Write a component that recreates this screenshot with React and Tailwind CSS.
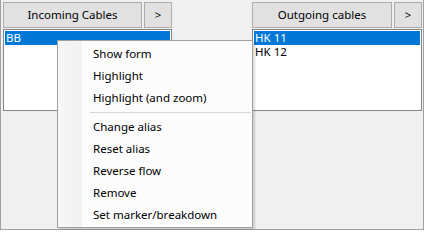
import React from "react";

const font = { fontFamily: '"Noto Sans", "Liberation Sans", sans-serif' };

function CableList({ title, items, className }) {
  return (
    <div className={`flex w-[169px] flex-col ${className}`}>
      <div className="flex h-[26px] gap-[2px]">
        <button
          type="button"
          className="flex-1 border border-[#adadad] bg-[#e1e1e1] text-[11.5px] text-black"
        >
          {title}
        </button>
        <button
          type="button"
          className="w-[28px] border border-[#adadad] bg-[#e1e1e1] text-[11.5px] text-black"
        >
          &gt;
        </button>
      </div>
      <ul className="mt-[1px] h-[82px] border border-[#828790] bg-white p-[1px]">
        {items.map((item, i) => (
          <li
            key={item}
            className={`h-[14px] pl-[1px] text-[11.5px] leading-[14px] ${
              i === 0 ? "bg-[#0078d7] text-white" : "text-black"
            }`}
          >
            {item}
          </li>
        ))}
      </ul>
    </div>
  );
}

const menuTop = ["Show form", "Highlight", "Highlight (and zoom)"];
const menuBottom = ["Change alias", "Reset alias", "Reverse flow", "Remove", "Set marker/breakdown"];

function MenuItem({ label }) {
  return (
    <div className="flex h-[22px] items-center pl-[35px] text-[11.5px] text-black">{label}</div>
  );
}

export default function App() {
  return (
    <div
      className="relative h-[230px] w-[424px] border-x border-b border-[#a0a0a0] bg-[#f0f0f0]"
      style={font}
    >
      <div className="flex justify-between pl-[2px] pr-[1px] pt-[2px]">
        <CableList title="Incoming Cables" items={["BB"]} />
        <CableList title="Outgoing cables" items={["HK 11", "HK 12"]} className="w-[170px]" />
      </div>

      <div className="absolute left-[56px] top-[40px] flex h-[188px] w-[196px] border border-[#a0a0a0] bg-[#fcfcfc] shadow-[2px_2px_2px_rgba(0,0,0,0.15)]">
        <div className="absolute bottom-0 left-0 top-0 w-[24px] bg-gradient-to-r from-[#f7f7f7] to-[#f1f1f1]" />
        <div className="relative flex w-full flex-col pb-[1px] pt-[2px]">
          {menuTop.map((label) => (
            <MenuItem key={label} label={label} />
          ))}
          <div className="flex h-[7px] items-center pl-[32px] pr-[1px]">
            <div className="h-[1px] w-full bg-[#d7d7d7]" />
          </div>
          {menuBottom.map((label) => (
            <MenuItem key={label} label={label} />
          ))}
        </div>
      </div>
    </div>
  );
}
